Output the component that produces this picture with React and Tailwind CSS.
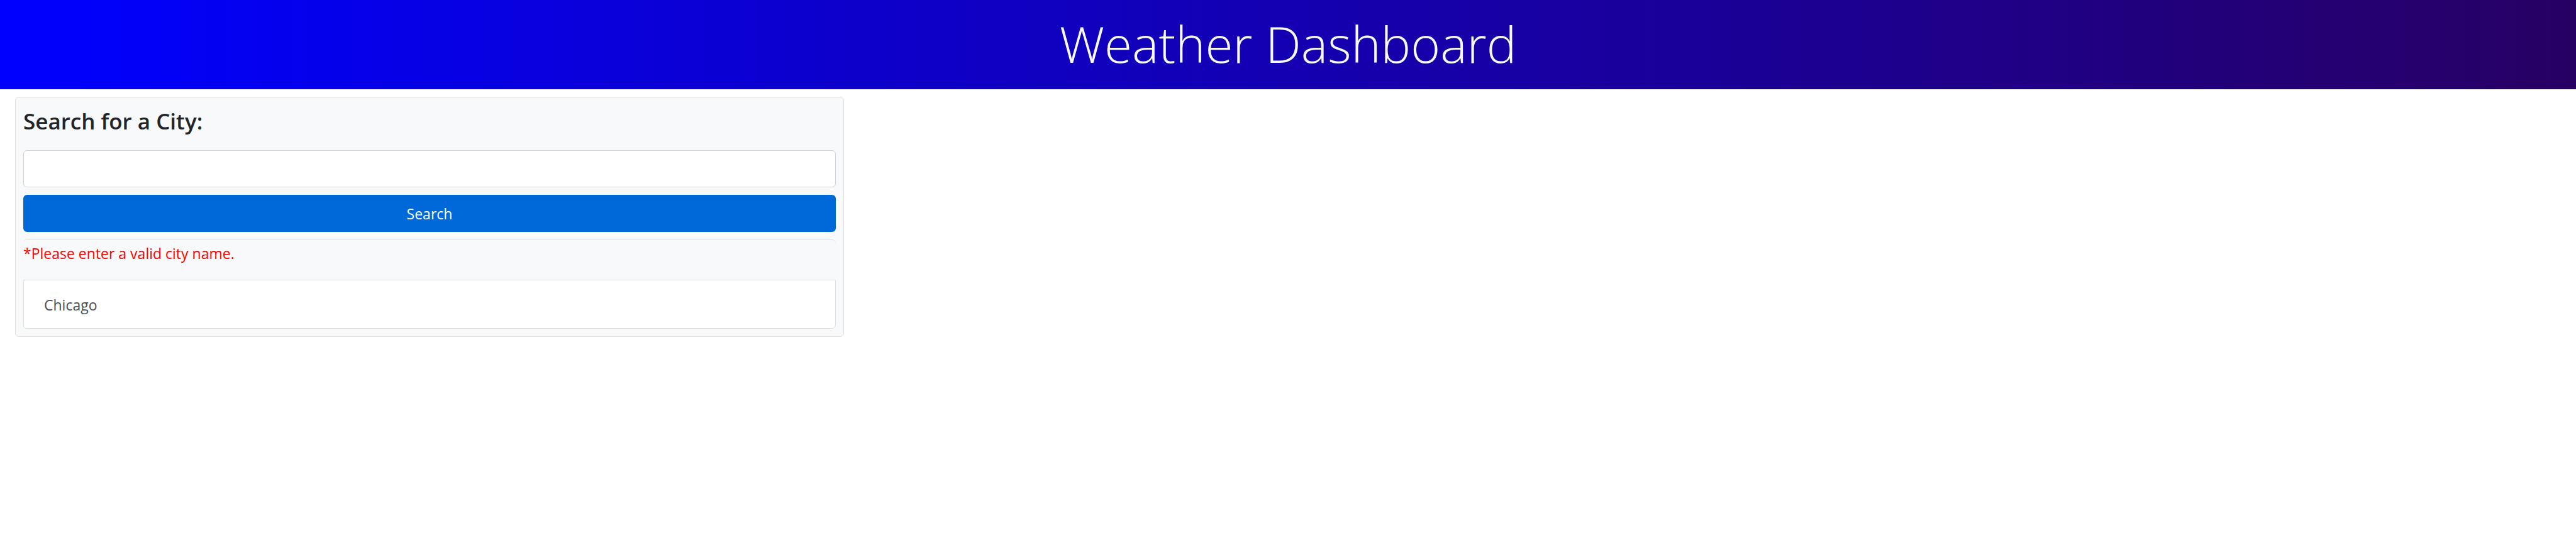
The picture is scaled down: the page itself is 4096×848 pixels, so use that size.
const history = ["Chicago"];

export default function App() {
  return (
    <div className="min-h-screen bg-white font-['Open_Sans',sans-serif] text-[23px] leading-9 text-[#212529]">
      <header className="flex h-[142px] items-center justify-center bg-linear-to-r/srgb from-[#0000ff] to-[#280064] pb-1">
        <h1 className="text-[80px] leading-[100px] font-light text-[#f8f9fa]">Weather Dashboard</h1>
      </header>
      <main className="px-6 pt-3">
        <aside className="w-[32.56%] rounded-md border border-[#dfdfdf] bg-[#f8f9fa] p-3">
          <form onSubmit={(e) => e.preventDefault()}>
            <label htmlFor="city" className="block pb-5 text-[35px] leading-[52px] font-semibold">
              Search for a City:
            </label>
            <input
              id="city"
              type="text"
              className="block h-[59px] w-full rounded-md border border-[#ced4da] bg-white px-5 outline-none"
            />
            <button type="submit" className="mt-3 block h-[59px] w-full rounded-md bg-[#0069d9] pt-px text-white">
              Search
            </button>
          </form>
          <div className="mt-3 rounded-md border-t border-[#dfdfdf]">
            <p className="pt-[3px] pb-6 text-[#ff0000]">*Please enter a valid city name.</p>
            <ul>
              {history.map((city) => (
                <li key={city}>
                  <button
                    type="button"
                    className="block h-[78px] w-full rounded-b-md border border-[#dfdfdf] bg-white px-8 pt-px text-left text-[#495057]"
                  >
                    {city}
                  </button>
                </li>
              ))}
            </ul>
          </div>
        </aside>
      </main>
    </div>
  );
}
